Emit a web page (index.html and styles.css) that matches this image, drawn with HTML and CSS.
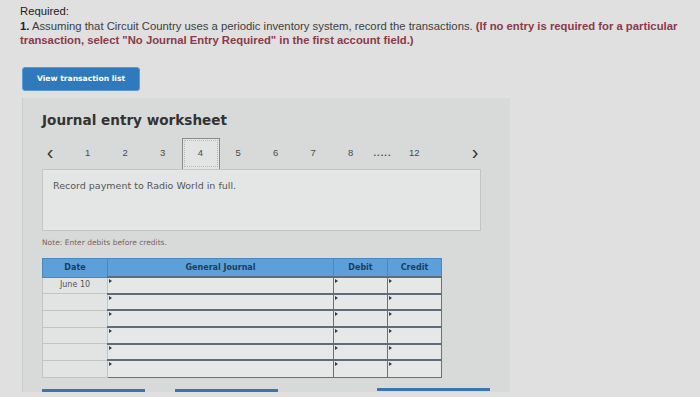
FILE: index.html
```html
<!DOCTYPE html>
<html lang="en">

<head>
    <meta charset="UTF-8">
    <meta name="viewport" content="width=device-width, initial-scale=1.0">
    <title>Journal entry worksheet</title>
    <link rel="stylesheet" href="styles.css">
</head>

<body>
    <div class="question">
        <p class="req-title">Required:</p>
        <p><b>1.</b> Assuming that Circuit Country uses a periodic inventory system, record the transactions. <span class="hint">(If no entry is required for a particular</span><br><span class="hint">transaction, select "No Journal Entry Required" in the first account field.)</span></p>
    </div>

    <button class="list-btn">View transaction list</button>

    <div class="worksheet">
        <h1>Journal entry worksheet</h1>

        <div class="pager">
            <span class="arrow">&lsaquo;</span>
            <span class="page">1</span>
            <span class="page">2</span>
            <span class="page">3</span>
            <span class="page current">4</span>
            <span class="page">5</span>
            <span class="page">6</span>
            <span class="page">7</span>
            <span class="page">8</span>
            <span class="dots">.....</span>
            <span class="page">12</span>
            <span class="spacer"></span>
            <span class="arrow">&rsaquo;</span>
        </div>

        <div class="task">Record payment to Radio World in full.</div>

        <p class="note">Note: Enter debits before credits.</p>

        <table class="journal">
            <thead>
                <tr>
                    <th class="col-date">Date</th>
                    <th class="col-acct">General Journal</th>
                    <th class="col-num">Debit</th>
                    <th class="col-num">Credit</th>
                </tr>
            </thead>
            <tbody>
                <tr>
                    <td class="date">June 10</td>
                    <td class="field"></td>
                    <td class="field"></td>
                    <td class="field"></td>
                </tr>
                <tr>
                    <td class="date"></td>
                    <td class="field"></td>
                    <td class="field"></td>
                    <td class="field"></td>
                </tr>
                <tr>
                    <td class="date"></td>
                    <td class="field"></td>
                    <td class="field"></td>
                    <td class="field"></td>
                </tr>
                <tr>
                    <td class="date"></td>
                    <td class="field"></td>
                    <td class="field"></td>
                    <td class="field"></td>
                </tr>
                <tr>
                    <td class="date"></td>
                    <td class="field"></td>
                    <td class="field"></td>
                    <td class="field"></td>
                </tr>
                <tr>
                    <td class="date"></td>
                    <td class="field"></td>
                    <td class="field"></td>
                    <td class="field"></td>
                </tr>
            </tbody>
        </table>

        <div class="actions">
            <span class="bar bar-record"></span>
            <span class="bar bar-clear"></span>
            <span class="bar bar-view"></span>
        </div>
    </div>
</body>

</html>
```

FILE: styles.css
```css
* {
    margin: 0;
    padding: 0;
    box-sizing: border-box;
}

html,
body {
    height: 100%;
    overflow: hidden;
}

body {
    font-family: 'Liberation Sans Narrow', 'Liberation Sans', Arial, sans-serif;
    background: #dfe0df;
    color: #3e3e3e;
    padding: 4px 0 0 20px;
}

/* Question text */
.question p {
    font-size: 11.3px;
    line-height: 14.5px;
}

.question .req-title {
    color: #222222;
}

.question b {
    color: #222222;
}

.hint {
    font-weight: bold;
    color: #8a3a4c;
}

.list-btn {
    display: block;
    margin: 19px 0 0 2px;
    width: 118px;
    height: 24px;
    background: #2f79bd;
    border: 1px solid #5e9ad0;
    border-radius: 3px;
    color: #ffffff;
    font-family: 'DejaVu Sans', Verdana, sans-serif;
    font-size: 7.6px;
    font-weight: bold;
    text-align: left;
    padding-left: 14px;
}

/* Worksheet panel */
.worksheet {
    margin: 7px 0 0 2px;
    width: 488px;
    height: 294px;
    background: #d8dad9;
    border-left: 1px solid #cbcdcc;
    padding: 12px 0 0 19px;
    font-family: 'DejaVu Sans', Verdana, sans-serif;
}

h1 {
    font-size: 13.6px;
    line-height: 20px;
    color: #333333;
}

.pager {
    display: flex;
    align-items: center;
    height: 31px;
    margin-top: 8px;
    width: 440px;
    font-family: 'Liberation Sans', Arial, sans-serif;
    font-size: 9.5px;
    color: #4a4a4a;
}

.arrow {
    width: 14px;
    font-size: 20px;
    line-height: 20px;
    color: #333333;
    text-align: center;
    margin-top: -3px;
}

.pager .arrow:first-child {
    margin-left: 1px;
    margin-right: 12px;
}

.page {
    width: 37.5px;
    text-align: center;
    margin-top: -2px;
}

.page.current {
    height: 31px;
    width: 38px;
    margin-top: 0;
    line-height: 28px;
    background: #e2e4e3;
    border: 1px solid #8a8a8a;
    border-bottom: none;
    outline: 1px dotted #bbbbbb;
    outline-offset: -3px;
}

.dots {
    width: 26px;
    text-align: center;
    letter-spacing: 1px;
    font-weight: bold;
    margin-top: -2px;
}

.spacer {
    flex: 1;
}

.task {
    width: 439px;
    height: 62px;
    background: #e4e6e5;
    border: 1px solid #c3c5c4;
    padding: 10px 10px;
    font-size: 9.5px;
    color: #555555;
}

.note {
    margin-top: 6px;
    font-size: 7.5px;
    line-height: 12px;
    color: #7c5f60;
}

/* Journal table */
.journal {
    margin-top: 9px;
    width: 400px;
    border-collapse: collapse;
    table-layout: fixed;
}

.journal th {
    height: 19px;
    background: #5d9fd8;
    border: 1px solid #4a88c0;
    color: #203c5c;
    font-size: 8px;
    font-weight: bold;
}

.col-date {
    width: 65px;
}

.col-acct {
    width: 226px;
}

.col-num {
    width: 54px;
}

.journal td {
    height: 16.7px;
}

.journal td.date {
    background: #e2e4e3;
    border: 1px solid #c2c4c3;
    text-align: center;
    font-size: 8px;
    color: #555555;
    vertical-align: top;
    padding-top: 2px;
}

.journal td.field {
    position: relative;
    background: #e6e8e8;
    border: 1px solid #4d78a4;
    border-top: 2px solid #5d6d7e;
}

.journal td.field::before {
    content: '';
    position: absolute;
    top: 1px;
    left: 1px;
    border-top: 2px solid transparent;
    border-bottom: 2px solid transparent;
    border-left: 3px solid #2e3c4c;
}

/* Bottom buttons (cut off) */
.actions {
    display: flex;
    margin-top: 11px;
}

.bar {
    height: 3px;
    background: #3a76ad;
}

.bar-record {
    width: 103px;
}

.bar-clear {
    width: 103px;
    margin-left: 30px;
}

.bar-view {
    width: 113px;
    margin-left: 99px;
    margin-top: -1px;
}
```
